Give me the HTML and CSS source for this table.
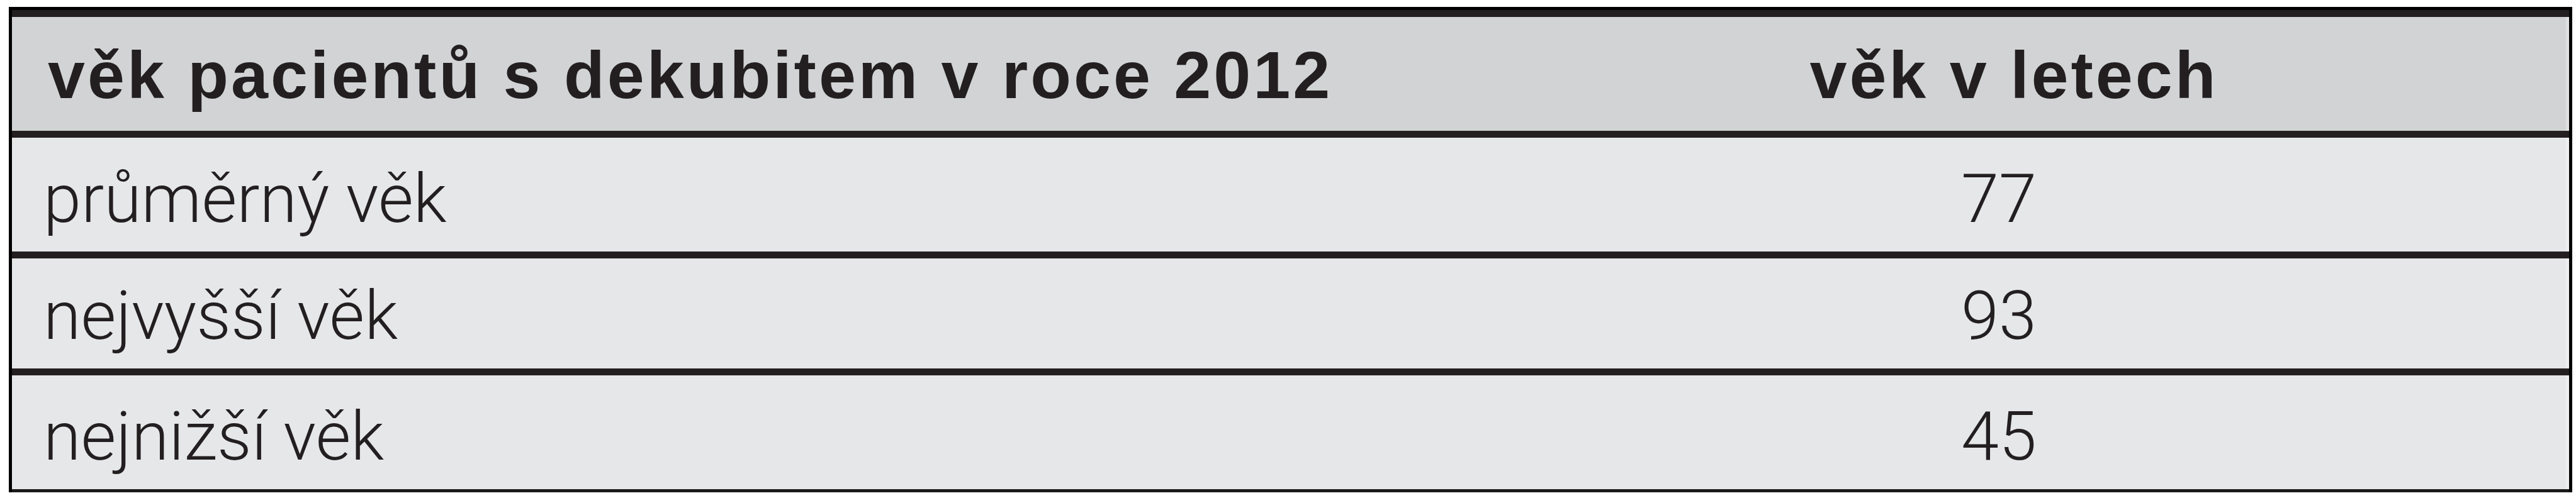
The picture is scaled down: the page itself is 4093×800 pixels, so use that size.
FILE: index.html
```html
<!DOCTYPE html>
<html lang="cs">
<head>
<meta charset="utf-8">
<title>Věk pacientů s dekubitem</title>
<link rel="stylesheet" href="styles.css">
</head>
<body>
<div class="frame">
  <div class="stack">
    <div class="row head">
      <div class="cell label">věk pacientů s dekubitem v roce 2012</div>
      <div class="cell value">věk v letech</div>
    </div>
    <div class="row">
      <div class="cell label">průměrný věk</div>
      <div class="cell value">77</div>
    </div>
    <div class="row short">
      <div class="cell label">nejvyšší věk</div>
      <div class="cell value">93</div>
    </div>
    <div class="row last">
      <div class="cell label">nejnižší věk</div>
      <div class="cell value">45</div>
    </div>
  </div>
</div>
</body>
</html>
```

FILE: styles.css
```css
html, body {
  margin: 0;
  padding: 0;
  background: #ffffff;
}

.frame {
  box-sizing: border-box;
  margin: 11px 0 0 14px;
  width: 4073px;
  height: 772px;
  border-top: 5px solid #000000;
  border-left: 5px solid #000000;
  border-right: 5px solid #000000;
}

.stack {
  display: flex;
  flex-direction: column;
  color: #231f20;
}

.row {
  display: grid;
  grid-template-columns: 2251px 1fr;
  height: 181px;
  border-top: 11px solid #231f20;
  box-shadow: inset -5px 0 0 rgba(255, 255, 255, 0.3);
  background: #e6e7e8;
  font-family: Roboto, "Liberation Sans", sans-serif;
  font-weight: 300;
  font-size: 108px;
}

.row.short {
  height: 175px;
}

.row.last {
  border-bottom: 10px solid #1c191a;
}

.row.head {
  background: #d1d3d4;
  font-family: "Liberation Sans", Arial, sans-serif;
  font-weight: 700;
  font-size: 106px;
  letter-spacing: 4px;
}

.cell {
  display: flex;
  align-items: flex-end;
  padding-bottom: 21px;
  line-height: normal;
  white-space: nowrap;
}

.head .cell {
  padding-bottom: 28px;
}

.label {
  padding-left: 50px;
}

.head .label {
  padding-left: 57px;
}

.value {
  justify-content: center;
}

.head .value {
  padding-left: 48px;
}
```
